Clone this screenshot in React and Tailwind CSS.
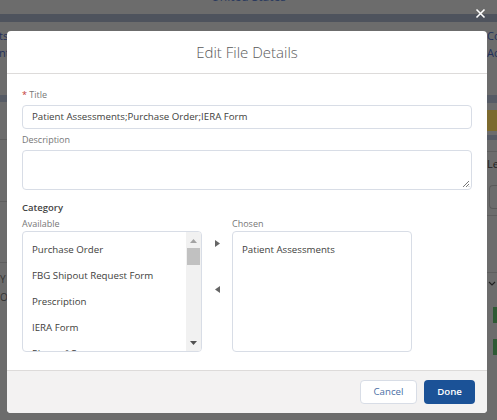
import React from "react";

const availableItems = [
  "Purchase Order",
  "FBG Shipout Request Form",
  "Prescription",
  "IERA Form",
  "Plans of Care",
];

function Backdrop() {
  // page behind the overlay, darkened
  return (
    <div className="flex h-full flex-col bg-[#6c6c6c]">
      <div className="flex h-[14px] items-start justify-center overflow-hidden">
        <span className="-mt-[9px] text-[12px] leading-[12px] text-[#2b3a5e]">United States</span>
      </div>
      <div className="h-[8px] bg-[#4e535d]" />
      <div className="flex flex-1 justify-between">
        <div className="flex w-[7px] flex-col overflow-hidden text-[11px] leading-[14px] text-[#23305a]">
          <span className="mt-[7px] -ml-[1px]">ts</span>
          <span className="mt-[3px] -ml-[1px]">nt</span>
          <div className="mt-[35px] h-[7px] bg-[#565b65]" />
          <div className="mt-[37px] h-px bg-[#5e5e5e]" />
          <div className="mt-[61px] h-px bg-[#5e5e5e]" />
          <div className="mt-[60px] h-px bg-[#5e5e5e]" />
          <span className="mt-[9px] text-[10px] text-[#333]">Y</span>
          <span className="mt-[4px] text-[10px] text-[#333]">O</span>
        </div>
        <div className="flex w-[10px] flex-col overflow-hidden text-[11px] leading-[14px] text-[#23305a]">
          <span className="mt-[7px]">Co</span>
          <span className="mt-[3px]">Ac</span>
          <div className="mt-[35px] h-[8px] bg-[#565b65]" />
          <div className="mt-[7px] h-[21px] bg-[#7c6a2e]" />
          <div className="mt-[4px] h-[5px] bg-[#565b65]" />
          <div className="mt-[11px] h-px bg-[#5e5e5e]" />
          <span className="mt-[5px] text-[#222]">Le</span>
          <div className="mt-[14px] ml-[2px] h-[24px] rounded-l border border-r-0 border-[#5a5a5a]" />
          <div className="mt-[6px] h-px bg-[#5e5e5e]" />
          <div className="mt-[56px] h-px bg-[#5e5e5e]" />
          <svg className="mt-[8px] ml-[1px]" width="8" height="6" viewBox="0 0 8 6">
            <path d="M1 1l3 3 3-3" fill="none" stroke="#222" strokeWidth="1.2" />
          </svg>
          <div className="mt-[20px] ml-[6px] h-[16px] bg-[#2e5a34]" />
          <div className="mt-[16px] ml-[6px] h-[16px] bg-[#2e5a34]" />
        </div>
      </div>
    </div>
  );
}

function Listbox({ items, scroll }) {
  return (
    <div className="flex h-[121px] w-[180px] overflow-hidden rounded border border-[#d8dde6] bg-white">
      <ul className="flex-1 overflow-hidden pl-[9px] pt-[11px]">
        {items.map((it) => (
          <li key={it} className="h-[26px] text-[9.7px] leading-[13px] text-[#3e3e3c]">
            {it}
          </li>
        ))}
      </ul>
      {scroll && (
        <div className="flex w-[15px] flex-col items-center bg-[#f1f1f1]">
          <svg className="mt-[7px]" width="7" height="4" viewBox="0 0 7 4">
            <path d="M0 4h7L3.5 0z" fill="#a3a3a3" />
          </svg>
          <div className="mt-[5px] h-[17px] w-[13px] bg-[#c1c1c1]" />
          <div className="flex-1" />
          <svg className="mb-[6px]" width="7" height="4" viewBox="0 0 7 4">
            <path d="M0 0h7L3.5 4z" fill="#505050" />
          </svg>
        </div>
      )}
    </div>
  );
}

export default function App() {
  return (
    <div
      className="relative h-[420px] w-[497px] overflow-hidden"
      style={{ fontFamily: "'Open Sans', 'Liberation Sans', sans-serif" }}
    >
      <Backdrop />

      <button className="absolute left-[475px] top-[8px]">
        <svg width="11" height="11" viewBox="0 0 11 11">
          <path d="M1.5 1.5l8 8M9.5 1.5l-8 8" stroke="#fff" strokeWidth="1.6" />
        </svg>
      </button>

      {/* Modal */}
      <div className="absolute left-[7px] top-[31px] w-[480px] overflow-hidden rounded bg-white">
        <div className="flex h-[43px] items-center justify-center border-b border-[#dddbda]">
          <h2 className="text-[15px] font-light text-[#5a5a5a]">Edit File Details</h2>
        </div>

        <div className="h-[296px] px-[15px] pt-[15px]">
          <label className="block text-[9px] leading-[12px] text-[#777]">
            <span className="text-[#c23934]">*</span> Title
          </label>
          <div className="mt-[4px] flex h-[24px] items-center rounded border border-[#d8dde6] px-[9px] text-[9.7px] text-[#3e3e3c]">
            Patient Assessments;Purchase Order;IERA Form
          </div>

          <label className="mt-[5px] block text-[9px] leading-[12px] text-[#777]">Description</label>
          <div className="relative mt-[4px] h-[40px] rounded border border-[#d8dde6]">
            <svg className="absolute bottom-[1px] right-[1px]" width="8" height="8" viewBox="0 0 8 8">
              <path d="M7 1L1 7M7 4L4 7M7 6.5L6.5 7" stroke="#555" strokeWidth="0.8" />
            </svg>
          </div>

          <div className="mt-[12px] text-[9.5px] font-semibold leading-[12px] text-[#444]">Category</div>
          <div className="mt-[4px] flex">
            <div>
              <div className="text-[9px] leading-[12px] text-[#777]">Available</div>
              <div className="mt-[1px]">
                <Listbox items={availableItems} scroll />
              </div>
            </div>
            <div className="flex w-[30px] flex-col items-center pt-[22px]">
              <svg width="5" height="7" viewBox="0 0 5 7">
                <path d="M0 0v7l5-3.5z" fill="#666" />
              </svg>
              <svg className="mt-[39px]" width="5" height="7" viewBox="0 0 5 7">
                <path d="M5 0v7L0 3.5z" fill="#666" />
              </svg>
            </div>
            <div>
              <div className="text-[9px] leading-[12px] text-[#777]">Chosen</div>
              <div className="mt-[1px]">
                <Listbox items={["Patient Assessments"]} />
              </div>
            </div>
          </div>
        </div>

        <div className="flex h-[43px] items-center justify-end gap-[7px] border-t border-[#dddbda] bg-[#f3f2f2] pr-[12px]">
          <button className="h-[24px] w-[57px] rounded border border-[#d8dde6] bg-white text-[9.7px] text-[#4a6fa5]">
            Cancel
          </button>
          <button className="h-[24px] w-[51px] rounded bg-[#1b5297] text-[9.7px] font-semibold text-white">
            Done
          </button>
        </div>
      </div>
    </div>
  );
}
